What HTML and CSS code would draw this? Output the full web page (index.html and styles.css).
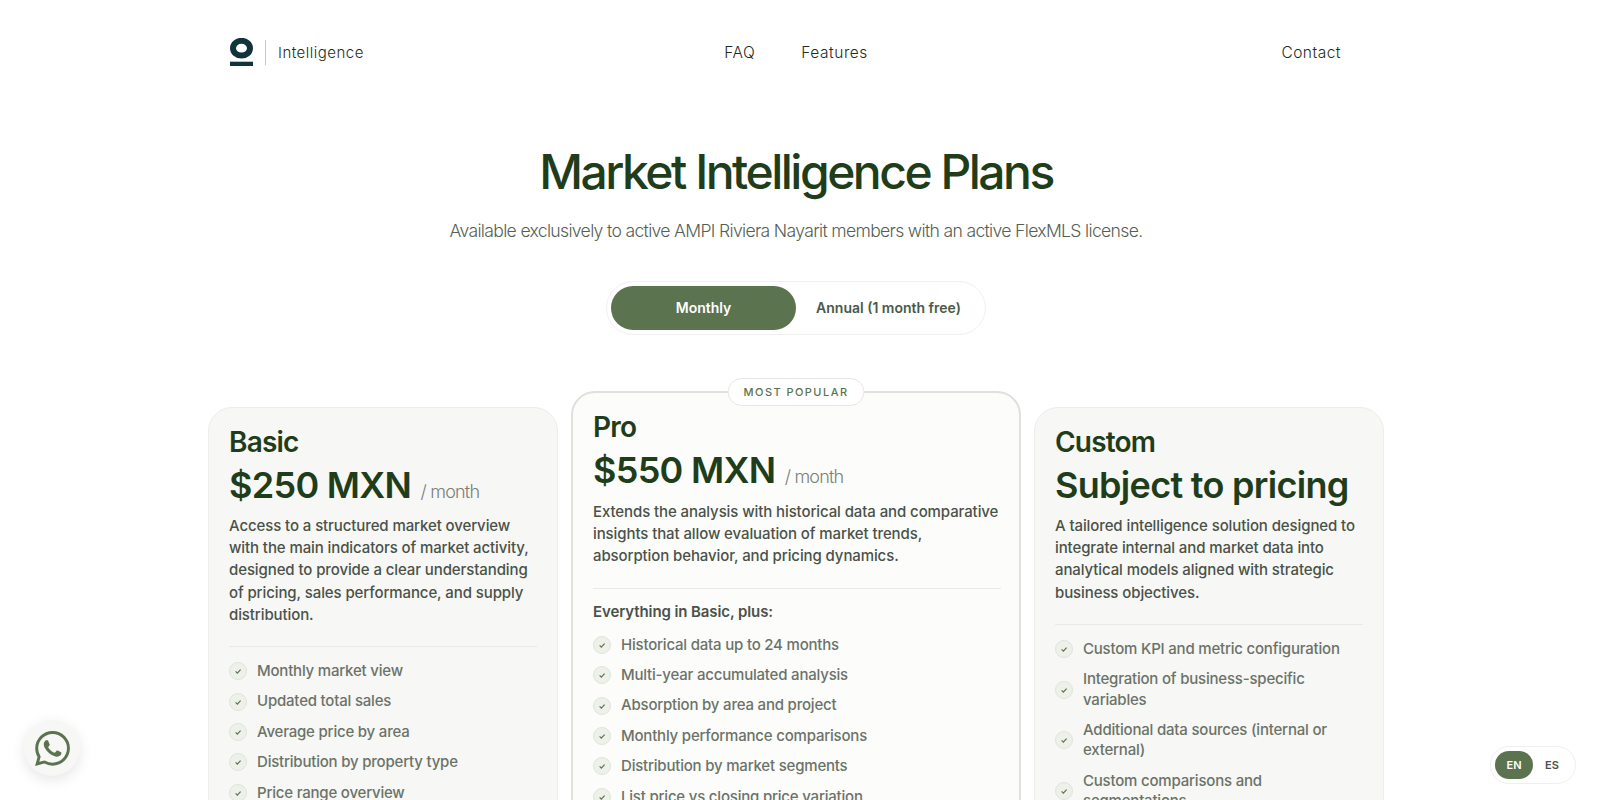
FILE: index.html
```html
<!DOCTYPE html>
<html>
<head>
    <title>Market Intelligence Plans</title>
    <link rel="stylesheet" href="styles.css">
</head>
<body>
    <header class="nav">
        <div class="brand">
            <svg class="logo" width="23" height="28" viewBox="0 0 23 28">
                <ellipse cx="11.5" cy="10.2" rx="8.5" ry="7.4" fill="none" stroke="#10343a" stroke-width="6"></ellipse>
                <rect x="0" y="23.7" width="23" height="4.3" fill="#10343a"></rect>
            </svg>
            <span class="brand-name">Intelligence</span>
        </div>
        <nav class="nav-links">
            <a>FAQ</a>
            <a>Features</a>
        </nav>
        <a class="nav-contact">Contact</a>
    </header>

    <section class="hero">
        <h1>Market Intelligence Plans</h1>
        <p>Available exclusively to active AMPI Riviera Nayarit members with an active FlexMLS license.</p>
        <div class="toggle">
            <button class="active">Monthly</button>
            <button>Annual (1 month free)</button>
        </div>
    </section>

    <main class="plans">
        <article class="card">
            <h2>Basic</h2>
            <div class="price">$250 MXN <span>/ month</span></div>
            <p class="desc">Access to a structured market overview with the main indicators of market activity, designed to provide a clear understanding of pricing, sales performance, and supply distribution.</p>
            <ul>
                <li><svg class="check" viewBox="0 0 20 20"><path d="M7 10.5l2.2 2.2 4-4.4"></path></svg>Monthly market view</li>
                <li><svg class="check" viewBox="0 0 20 20"><path d="M7 10.5l2.2 2.2 4-4.4"></path></svg>Updated total sales</li>
                <li><svg class="check" viewBox="0 0 20 20"><path d="M7 10.5l2.2 2.2 4-4.4"></path></svg>Average price by area</li>
                <li><svg class="check" viewBox="0 0 20 20"><path d="M7 10.5l2.2 2.2 4-4.4"></path></svg>Distribution by property type</li>
                <li><svg class="check" viewBox="0 0 20 20"><path d="M7 10.5l2.2 2.2 4-4.4"></path></svg>Price range overview</li>
            </ul>
        </article>

        <article class="card card-pro">
            <span class="badge">MOST POPULAR</span>
            <h2>Pro</h2>
            <div class="price">$550 MXN <span>/ month</span></div>
            <p class="desc">Extends the analysis with historical data and comparative insights that allow evaluation of market trends, absorption behavior, and pricing dynamics.</p>
            <h3>Everything in Basic, plus:</h3>
            <ul>
                <li><svg class="check" viewBox="0 0 20 20"><path d="M7 10.5l2.2 2.2 4-4.4"></path></svg>Historical data up to 24 months</li>
                <li><svg class="check" viewBox="0 0 20 20"><path d="M7 10.5l2.2 2.2 4-4.4"></path></svg>Multi-year accumulated analysis</li>
                <li><svg class="check" viewBox="0 0 20 20"><path d="M7 10.5l2.2 2.2 4-4.4"></path></svg>Absorption by area and project</li>
                <li><svg class="check" viewBox="0 0 20 20"><path d="M7 10.5l2.2 2.2 4-4.4"></path></svg>Monthly performance comparisons</li>
                <li><svg class="check" viewBox="0 0 20 20"><path d="M7 10.5l2.2 2.2 4-4.4"></path></svg>Distribution by market segments</li>
                <li><svg class="check" viewBox="0 0 20 20"><path d="M7 10.5l2.2 2.2 4-4.4"></path></svg>List price vs closing price variation</li>
            </ul>
        </article>

        <article class="card">
            <h2>Custom</h2>
            <div class="price">Subject to pricing</div>
            <p class="desc">A tailored intelligence solution designed to integrate internal and market data into analytical models aligned with strategic business objectives.</p>
            <ul>
                <li><svg class="check" viewBox="0 0 20 20"><path d="M7 10.5l2.2 2.2 4-4.4"></path></svg>Custom KPI and metric configuration</li>
                <li><svg class="check" viewBox="0 0 20 20"><path d="M7 10.5l2.2 2.2 4-4.4"></path></svg>Integration of business-specific variables</li>
                <li><svg class="check" viewBox="0 0 20 20"><path d="M7 10.5l2.2 2.2 4-4.4"></path></svg>Additional data sources (internal or external)</li>
                <li><svg class="check" viewBox="0 0 20 20"><path d="M7 10.5l2.2 2.2 4-4.4"></path></svg>Custom comparisons and segmentations</li>
            </ul>
        </article>
    </main>

    <a class="whatsapp">
        <svg width="35" height="35" viewBox="0 0 24 24" fill="#5c7350">
            <path d="M17.47 14.38c-.3-.15-1.76-.87-2.03-.97-.27-.1-.47-.15-.67.15-.2.3-.77.97-.94 1.16-.17.2-.35.22-.64.08-.3-.15-1.26-.46-2.39-1.48-.88-.79-1.48-1.76-1.65-2.06-.17-.3-.02-.46.13-.6.13-.14.3-.35.45-.52.15-.17.2-.3.3-.5.1-.2.05-.37-.03-.52-.07-.15-.67-1.61-.92-2.21-.24-.58-.49-.5-.67-.51h-.57c-.2 0-.52.07-.79.37-.27.3-1.04 1.02-1.04 2.48 0 1.46 1.07 2.88 1.21 3.07.15.2 2.1 3.2 5.08 4.49.71.3 1.26.49 1.69.62.71.23 1.36.2 1.87.12.57-.09 1.76-.72 2.01-1.42.25-.69.25-1.29.17-1.41-.07-.13-.27-.2-.57-.35zM12.05 21.78h0a9.87 9.87 0 0 1-5.03-1.38l-.36-.21-3.74.98 1-3.65-.24-.37a9.86 9.86 0 0 1-1.51-5.26c0-5.45 4.44-9.88 9.89-9.88 2.64 0 5.12 1.03 6.99 2.9a9.83 9.83 0 0 1 2.89 6.99c0 5.45-4.44 9.88-9.89 9.88zM20.46 3.49A11.82 11.82 0 0 0 12.05 0C5.5 0 .16 5.34.16 11.89c0 2.1.55 4.14 1.59 5.95L.06 24l6.3-1.65a11.88 11.88 0 0 0 5.68 1.45h.01c6.55 0 11.89-5.34 11.89-11.9 0-3.18-1.24-6.16-3.49-8.41z"></path>
        </svg>
    </a>

    <div class="lang">
        <button class="active">EN</button>
        <button>ES</button>
    </div>
</body>
</html>
```

FILE: styles.css
```css
* {
    box-sizing: border-box;
}
html, body {
    height: 800px;
    overflow: hidden;
}
body {
    width: 1592px;
    margin: 0;
    font-family: Inter, "Liberation Sans", sans-serif;
    background-color: #fff;
    color: #1f3d1a;
}
.nav {
    width: 1132px;
    height: 104px;
    margin: 0 auto;
    display: grid;
    grid-template-columns: 1fr auto 1fr;
    align-items: center;
    font-size: 15px;
    font-weight: 300;
    letter-spacing: 0.5px;
    color: #1f2b22;
}
.brand {
    display: flex;
    align-items: center;
}
.logo {
    margin-right: 12px;
}
.brand-name {
    border-left: 1px solid #c4c8c4;
    padding: 3px 0 3px 12px;
}
.nav-links {
    display: flex;
    gap: 46px;
    font-size: 15.5px;
    letter-spacing: 0.55px;
}
.nav-contact {
    justify-self: end;
    margin-right: 21px;
    font-size: 15.5px;
    letter-spacing: 0.5px;
}
.hero {
    text-align: center;
}
.hero h1 {
    margin: 39px 0 0;
    font-size: 48px;
    line-height: 58px;
    font-weight: 500;
    letter-spacing: -2.5px;
    color: #1f3d1a;
}
.hero p {
    margin: 17px 0 0;
    font-size: 17.6px;
    line-height: 26px;
    font-weight: 300;
    letter-spacing: -0.68px;
    color: #555f55;
}
.toggle {
    display: inline-flex;
    width: 380px;
    height: 54px;
    margin-top: 37px;
    padding: 4px;
    border: 1px solid #f0f1ee;
    border-radius: 27px;
    background-color: #fff;
}
.toggle button {
    flex: 1;
    padding: 0 0 2px;
    border: 0;
    border-radius: 22px;
    background: none;
    font-family: inherit;
    font-size: 14px;
    font-weight: 600;
    color: #4a5a48;
}
.toggle .active {
    background-color: #5c7350;
    color: #fff;
}
.plans {
    width: 1176px;
    margin: 56px auto 0;
    display: flex;
    align-items: flex-start;
    justify-content: space-between;
}
.card {
    position: relative;
    width: 350px;
    height: 600px;
    margin-top: 16px;
    padding: 17px 20px 20px;
    border: 1px solid #eceeea;
    border-radius: 24px;
    background-color: #f7f7f5;
}
.card-pro {
    width: 450px;
    margin-top: 0;
    padding-right: 18px;
    border: 2px solid #dfe1dc;
    background-color: #fcfcfb;
}
.badge {
    position: absolute;
    top: -15px;
    left: 50%;
    transform: translateX(-50%);
    padding: 6px 15px;
    border: 1px solid #e6e8e3;
    border-radius: 14px;
    background-color: #fff;
    font-size: 11px;
    line-height: 14px;
    font-weight: 500;
    letter-spacing: 1.45px;
    color: #5c7350;
    white-space: nowrap;
}
.card h2 {
    margin: 0;
    font-size: 28px;
    line-height: 34px;
    font-weight: 600;
    letter-spacing: -0.8px;
    color: #1f3d1a;
}
.price {
    margin-top: 3px;
    font-size: 36px;
    line-height: 46px;
    font-weight: 600;
    letter-spacing: -0.7px;
    color: #1f3d1a;
}
.price span {
    margin-left: 1px;
    font-size: 18px;
    line-height: 1;
    font-weight: 300;
    letter-spacing: -0.8px;
    color: #7a807a;
}
.desc {
    margin: 7px 0 0;
    padding-bottom: 20px;
    border-bottom: 1px solid #e8eae6;
    font-size: 15px;
    line-height: 22.2px;
    font-weight: 500;
    letter-spacing: -0.1px;
    color: #4a5249;
}
.card-pro .desc {
    margin-top: 8px;
}
.card h3 {
    margin: 12px 0 0;
    font-size: 15px;
    line-height: 22px;
    font-weight: 600;
    letter-spacing: -0.1px;
    color: #4a5249;
}
.card ul {
    margin: 9px 0 0;
    padding: 0;
    list-style: none;
}
.card h3 + ul {
    margin-top: 7px;
}
.card li {
    display: flex;
    align-items: center;
    gap: 10px;
    padding: 5px 0;
    font-size: 15px;
    line-height: 20.4px;
    font-weight: 500;
    letter-spacing: -0.2px;
    color: #6b7369;
}
.check {
    flex: none;
    width: 18px;
    height: 18px;
    border: 1px solid #dfe5da;
    border-radius: 50%;
    background-color: #eef1ea;
    fill: none;
    stroke: #5c7350;
    stroke-width: 1.5;
}
.whatsapp {
    position: fixed;
    left: 24px;
    bottom: 24px;
    width: 56px;
    height: 56px;
    display: flex;
    align-items: center;
    justify-content: center;
    border-radius: 50%;
    background-color: #f7f7f5;
    box-shadow: 0 4px 14px rgba(0, 0, 0, 0.1);
}
.lang {
    position: fixed;
    right: 24px;
    bottom: 16px;
    display: flex;
    padding: 4px;
    border: 1px solid #eef0ec;
    border-radius: 20px;
    background-color: #fff;
}
.lang button {
    width: 38px;
    height: 28px;
    border: 0;
    border-radius: 14px;
    background: none;
    font-family: inherit;
    font-size: 11px;
    font-weight: 600;
    color: #4a5249;
}
.lang .active {
    background-color: #5c7350;
    color: #fff;
}
```
